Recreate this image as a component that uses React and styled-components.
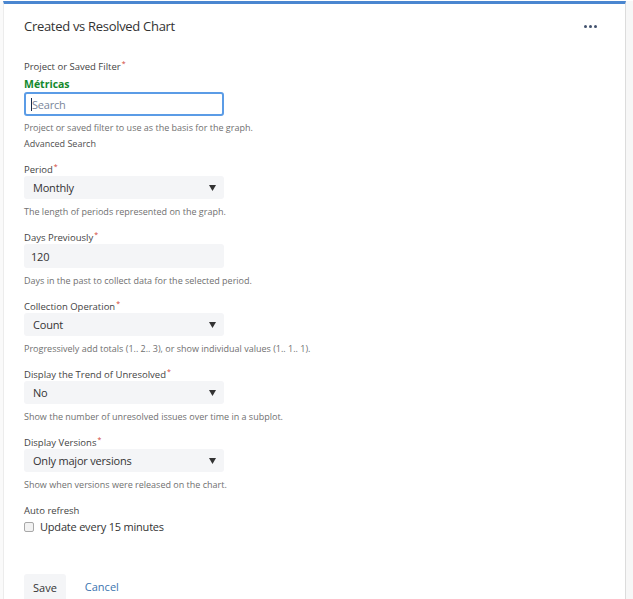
import styled, { createGlobalStyle } from "styled-components";

const GlobalStyle = createGlobalStyle`
  html, body {
    margin: 0;
    padding: 0;
    background: #ffffff;
  }
  body {
    font-family: "Open Sans", "Noto Sans", sans-serif;
    color: #333333;
  }
`;

const Page = styled.div`
  display: flex;
  padding-top: 1px;
  height: 598px;
  overflow: hidden;
`;

const Gutter = styled.div`
  width: ${(p) => p.w}px;
  flex: none;
  background: ${(p) => p.bg};
`;

const Panel = styled.div`
  width: 621px;
  flex: none;
  border-top: 3px solid #4a86d0;
  border-left: 1px solid #ececec;
  border-right: 1px solid #dcdcdc;
  background: #fff;
`;

const Header = styled.div`
  height: 44px;
  display: flex;
  align-items: center;
  justify-content: space-between;
  padding: 0 28px 0 20px;
`;

const Title = styled.h2`
  margin: 0;
  font-size: 13px;
  font-weight: 400;
  color: #333;
  letter-spacing: -0.3px;
`;

const Dots = styled.div`
  display: flex;
  gap: 2px;
  span {
    width: 3px;
    height: 3px;
    border-radius: 50%;
    background: #42526e;
  }
`;

const Form = styled.form`
  padding: 12px 20px 0;
`;

const Field = styled.div`
  margin-bottom: 12px;
`;

const Label = styled.div`
  font-size: 9.5px;
  line-height: 13px;
  color: #444;
  sup {
    color: #d04437;
    font-size: 7px;
    line-height: 0;
    margin-left: 1px;
  }
`;

const Filter = styled.div`
  margin-top: 4px;
  font-size: 10.5px;
  line-height: 14px;
  font-weight: 700;
  color: #14892c;
`;

const SearchBox = styled.div`
  margin-top: 1px;
  width: 200px;
  height: 24px;
  box-sizing: border-box;
  border: 2px solid #5b9ce6;
  border-radius: 3px;
  display: flex;
  align-items: center;
  padding-left: 5px;
  font-size: 11px;
  letter-spacing: -0.2px;
  color: #7a869a;
`;

const Caret = styled.span`
  width: 1px;
  height: 13px;
  background: #172b4d;
`;

const Control = styled.div`
  width: 200px;
  height: ${(p) => p.h || 23}px;
  box-sizing: border-box;
  background: #f4f5f7;
  border-radius: 3px;
  display: flex;
  align-items: center;
  justify-content: space-between;
  padding: 0 8px 0 ${(p) => p.pl || 9}px;
  font-size: 11px;
  letter-spacing: -0.2px;
  color: #333;
`;

const Help = styled.div`
  margin-top: ${(p) => p.mt ?? 6}px;
  font-size: 9px;
  line-height: 14px;
  color: #707070;
`;

const Plain = styled.div`
  margin-top: 2px;
  font-size: 9px;
  line-height: 14px;
  color: #505050;
`;

const CheckRow = styled.label`
  margin-top: 3px;
  display: flex;
  align-items: center;
  gap: 6px;
  font-size: 11px;
  letter-spacing: -0.2px;
  line-height: 14px;
  color: #333;
`;

const Box = styled.span`
  width: 8px;
  height: 8px;
  border: 1px solid #a8a8a8;
  border-radius: 2px;
  background: #f2f2f2;
`;

const Actions = styled.div`
  margin-top: 40px;
  display: flex;
  align-items: flex-start;
  gap: 19px;
`;

const Button = styled.button`
  border: none;
  border-radius: 3px 3px 0 0;
  background: #f4f5f7;
  height: 28px;
  padding: 0 9px 2px;
  font-family: inherit;
  font-size: 11px;
  color: #333;
`;

const LinkButton = styled.a`
  margin-top: 6px;
  font-size: 11px;
  line-height: 14px;
  color: #3b73af;
  text-decoration: none;
`;

const Arrow = () => (
  <svg width="7" height="6" viewBox="0 0 7 6">
    <path d="M0 0 H7 L3.5 6 Z" fill="#333" />
  </svg>
);

const Req = () => <sup>*</sup>;

const selects = [
  {
    label: "Period",
    value: "Monthly",
    help: "The length of periods represented on the graph.",
  },
  {
    label: "Days Previously",
    value: "120",
    text: true,
    help: "Days in the past to collect data for the selected period.",
  },
  {
    label: "Collection Operation",
    value: "Count",
    help: "Progressively add totals (1.. 2.. 3), or show individual values (1.. 1.. 1).",
  },
  {
    label: "Display the Trend of Unresolved",
    value: "No",
    help: "Show the number of unresolved issues over time in a subplot.",
  },
  {
    label: "Display Versions",
    value: "Only major versions",
    help: "Show when versions were released on the chart.",
  },
];

export default function App() {
  return (
    <>
      <GlobalStyle />
      <Page>
        <Gutter w={3} bg="#fafafa" />
        <Panel>
          <Header>
            <Title>Created vs Resolved Chart</Title>
            <Dots>
              <span />
              <span />
              <span />
            </Dots>
          </Header>
          <Form>
            <Field>
              <Label>
                Project or Saved Filter
                <Req />
              </Label>
              <Filter>Métricas</Filter>
              <SearchBox>
                <Caret />
                Search
              </SearchBox>
              <Help mt={5}>Project or saved filter to use as the basis for the graph.</Help>
              <Plain>Advanced Search</Plain>
            </Field>
            {selects.map((s) => (
              <Field key={s.label}>
                <Label>
                  {s.label}
                  <Req />
                </Label>
                <Control h={s.text ? 24 : 23} pl={s.text ? 7 : 9}>
                  <span>{s.value}</span>
                  {!s.text && <Arrow />}
                </Control>
                <Help>{s.help}</Help>
              </Field>
            ))}
            <Field>
              <Label>Auto refresh</Label>
              <CheckRow>
                <Box />
                Update every 15 minutes
              </CheckRow>
            </Field>
            <Actions>
              <Button type="button">Save</Button>
              <LinkButton href="#">Cancel</LinkButton>
            </Actions>
          </Form>
        </Panel>
        <Gutter w={7} bg="#f7f7f7" />
      </Page>
    </>
  );
}
